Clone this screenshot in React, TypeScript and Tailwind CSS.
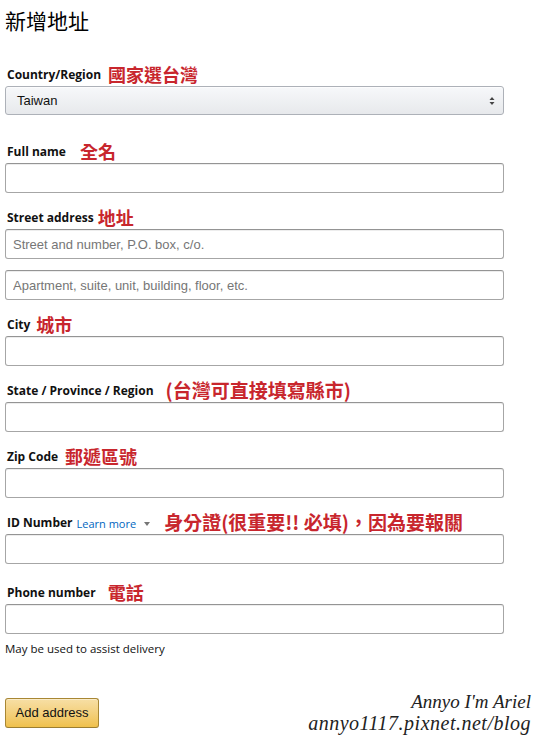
import React from "react";

const font = { fontFamily: '"Liberation Sans", "Noto Sans CJK TC", Arial, sans-serif' };
const labelFont = { fontFamily: '"Open Sans", "Liberation Sans", sans-serif' };

function Note({ children, size = "text-[18px]" }: { children: React.ReactNode; size?: string }) {
  return (
    <span
      className={`${size} relative top-[3px] font-bold leading-none text-[#c8262d]`}
      style={{ fontFamily: '"Noto Sans CJK TC", sans-serif' }}
    >
      {children}
    </span>
  );
}

function Label({ text, note, gap = "ml-[6px]", extra }: { text: string; note?: React.ReactNode; gap?: string; extra?: React.ReactNode }) {
  return (
    <div className="flex h-[20px] items-end pl-[2px]">
      <span className="mb-[5px] text-[12px] font-bold leading-none text-[#111]" style={labelFont}>
        {text}
      </span>
      {extra}
      {note && <span className={gap}>{note}</span>}
    </div>
  );
}

function Input({ placeholder }: { placeholder?: string }) {
  return (
    <input
      placeholder={placeholder}
      className="block h-[30px] w-full rounded-[3px] border border-[#a6a6a6] border-t-[#949494] bg-white px-[7px] text-[13px] text-[#111] shadow-[0_1px_0_rgba(0,0,0,0.07)_inset] outline-none placeholder:text-[#767676]"
      style={font}
    />
  );
}

export default function App() {
  return (
    <div className="relative min-h-[735px] w-[535px] bg-white" style={font}>
      <div className="w-[504px] pl-[5px]">
        <h1
          className="pt-[7px] text-[21px] font-normal leading-[26px] text-black"
          style={{ fontFamily: '"Noto Sans CJK TC", serif' }}
        >
          新增地址
        </h1>

        <div className="mt-[33px]">
          <Label text="Country/Region" note={<Note>國家選台灣</Note>} gap="ml-[7px]" />
          <div className="flex h-[29px] items-center justify-between rounded-[3px] border border-[#adb1b8] bg-gradient-to-b from-[#f7f8fa] to-[#e7e9ec] pl-[11px] pr-[8px] shadow-[0_1px_0_rgba(255,255,255,0.6)_inset]">
            <span className="text-[13px] text-[#111]">Taiwan</span>
            <svg width="6" height="10" viewBox="0 0 6 10">
              <path d="M3 1 L5.5 4 H0.5 Z" fill="#444" />
              <path d="M3 9 L5.5 6 H0.5 Z" fill="#444" />
            </svg>
          </div>
        </div>

        <div className="mt-[28px]">
          <Label text="Full name" note={<Note>全名</Note>} gap="ml-[14px]" />
          <Input />
        </div>

        <div className="mt-[16px]">
          <Label text="Street address" note={<Note>地址</Note>} gap="ml-[4px]" />
          <Input placeholder="Street and number, P.O. box, c/o." />
          <div className="mt-[11px]">
            <Input placeholder="Apartment, suite, unit, building, floor, etc." />
          </div>
        </div>

        <div className="mt-[16px]">
          <Label text="City" note={<Note>城市</Note>} gap="ml-[6px]" />
          <Input />
        </div>

        <div className="mt-[16px]">
          <Label text="State / Province / Region" note={<Note size="text-[19px]">(台灣可直接填寫縣市)</Note>} gap="ml-[12px]" />
          <Input />
        </div>

        <div className="mt-[16px]">
          <Label text="Zip Code" note={<Note>郵遞區號</Note>} gap="ml-[7px]" />
          <Input />
        </div>

        <div className="mt-[16px]">
          <Label
            text="ID Number"
            extra={
              <span className="mb-[5px] ml-[4px] flex items-center text-[11px] leading-none text-[#0066c0]" style={labelFont}>
                Learn more
                <svg className="ml-[8px]" width="6" height="4" viewBox="0 0 6 4">
                  <path d="M0 0 H6 L3 4 Z" fill="#767676" />
                </svg>
              </span>
            }
            note={<Note size="text-[19px]">身分證(很重要!! 必填)，因為要報關</Note>}
            gap="ml-[14px]"
          />
          <Input />
        </div>

        <div className="mt-[20px]">
          <Label text="Phone number" note={<Note>電話</Note>} gap="ml-[12px]" />
          <Input />
          <p className="mt-[8px] text-[11.5px] leading-[14px] text-[#111]" style={labelFont}>
            May be used to assist delivery
          </p>
        </div>

        <button className="mt-[42px] h-[30px] w-[94px] rounded-[3px] border border-[#a88734] border-b-[#9c7e31] bg-gradient-to-b from-[#f7dfa5] to-[#f0c14b] text-[13px] text-[#111] shadow-[0_1px_0_rgba(255,255,255,0.4)_inset]">
          Add address
        </button>
      </div>

      <div
        className="absolute bottom-[2px] right-[4px] text-right italic leading-none text-[#222]"
        style={{ fontFamily: '"Liberation Serif", "DejaVu Serif", serif' }}
      >
        <div className="text-[19px]">Annyo I'm Ariel</div>
        <div className="mt-[2px] text-[20px] tracking-[0.5px]">annyo1117.pixnet.net/blog</div>
      </div>
    </div>
  );
}
